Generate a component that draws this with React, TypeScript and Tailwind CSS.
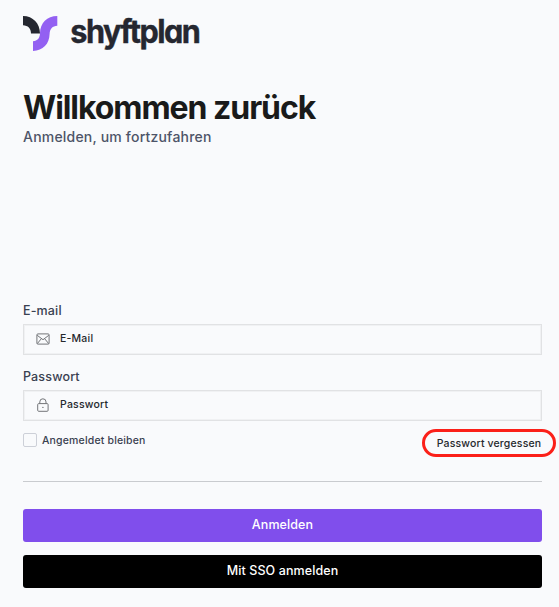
import type { ReactNode } from 'react'

function Logo() {
  return (
    <div className="flex h-[36px] items-start">
      <svg width="35" height="36" viewBox="0 0 35 36" className="shrink-0">
        <path d="M0 0C10 0 17 7.5 17 17.5H8C8 12.5 5 9.5 0 9.3Z" fill="#252730" />
        <path
          d="M34.3 0C24 0 17.2 7 17 17C17 22 14.5 25 10 25.2V34.9C20 34.7 26.4 28 26.6 18C26.8 13 29.5 10 34.3 9.8Z"
          fill="#9360f2"
        />
      </svg>
      <svg width="150" height="44" viewBox="0 0 150 44" className="shrink-0 overflow-visible">
        <text
          x="12.3"
          y="26.7"
          textLength="129"
          lengthAdjust="spacingAndGlyphs"
          strokeWidth="0.4"
          className="fill-[#252730] stroke-[#252730] font-['Inter',sans-serif] text-[32px] leading-[32px] font-bold tracking-[-1.6px] [font-feature-settings:'cv11']"
        >
          shyftplan
        </text>
      </svg>
    </div>
  )
}

function MailIcon() {
  return (
    <svg width="14" height="12" viewBox="0 0 14 12" fill="none" stroke="#737579" strokeWidth="1">
      <rect x="0.9" y="0.9" width="12.2" height="10.2" rx="1" />
      <path d="M1.2 2.3L7 6.7L12.8 2.3M1.3 10.6L5.1 6M12.7 10.6L8.9 6" />
    </svg>
  )
}

function LockIcon() {
  return (
    <svg width="14" height="14" viewBox="0 0 14 14" fill="none" stroke="#737579" strokeWidth="1">
      <rect x="1.7" y="5.6" width="10.4" height="7.7" rx="1" />
      <path d="M3.8 5.5V3.9a3.1 3.1 0 0 1 6.2 0v1.6" />
      <circle cx="6.9" cy="9.4" r="0.7" fill="#737579" stroke="none" />
    </svg>
  )
}

type FieldProps = {
  label: string
  placeholder: string
  type: string
  icon: ReactNode
}

function Field({ label, placeholder, type, icon }: FieldProps) {
  return (
    <label className="block h-[66px]">
      <span className="block h-[24px] text-[12.5px] leading-[22px] font-medium tracking-[0.15px] text-[#394150]">
        {label}
      </span>
      <span className="flex h-[31px] items-center border border-[#e1e2e4] pb-[2px] pl-[12px] shadow-[inset_0_0_0_1px_#f0f1f3]">
        <span className="flex w-[24px] shrink-0">{icon}</span>
        <input
          type={type}
          placeholder={placeholder}
          className="h-[20px] min-w-0 flex-1 bg-transparent text-[10.5px] font-medium tracking-[0.2px] outline-none placeholder:text-[#25282d]"
        />
      </span>
    </label>
  )
}

export default function App() {
  return (
    <main className="h-[607px] overflow-hidden bg-[#f9fafc] pt-[16px] pr-[17px] pl-[23px] font-['Inter',sans-serif]">
      <Logo />

      <header className="mt-[36px] h-[212px] whitespace-nowrap">
        <h1 className="text-[32px] leading-[40px] font-bold tracking-[-1.06px] text-[#1a1a1a]">
          Willkommen zurück
        </h1>
        <p className="text-[14px] leading-[18px] font-[450] tracking-[0.2px] text-[#4d5468]">
          Anmelden, um fortzufahren
        </p>
      </header>

      <form>
        <Field label="E-mail" placeholder="E-Mail" type="email" icon={<MailIcon />} />
        <Field label="Passwort" placeholder="Passwort" type="password" icon={<LockIcon />} />

        <div className="-mt-[3px] -mr-[14px] flex h-[28px] items-start justify-between">
          <label className="mt-[2px] flex h-[18px] items-center gap-[5px] text-[10.5px] font-medium tracking-[0.17px] text-[#394150]">
            <input
              type="checkbox"
              className="h-[14px] w-[14px] appearance-none rounded-[2px] border border-[#cdd0d8]"
            />
            <span className="pt-[2px]">Angemeldet bleiben</span>
          </label>
          <a
            href="#"
            className="flex h-[28px] w-[134px] items-center justify-center rounded-full border-3 border-[#fb2019] pt-[2px] text-[10.5px] font-medium tracking-[0.15px] whitespace-nowrap text-[#25282d]"
          >
            Passwort vergessen
          </a>
        </div>

        <hr className="mt-[24px] border-[#c9cbcf]" />

        <button
          type="submit"
          className="mt-[27px] block h-[33px] w-full rounded-[3px] bg-[#804eec] text-[12.5px] font-medium tracking-[0.1px] text-white"
        >
          Anmelden
        </button>
        <button
          type="button"
          className="mt-[13px] block h-[33px] w-full rounded-[3px] bg-black text-[12.5px] font-medium tracking-[0.1px] text-white"
        >
          Mit SSO anmelden
        </button>
      </form>
    </main>
  )
}
